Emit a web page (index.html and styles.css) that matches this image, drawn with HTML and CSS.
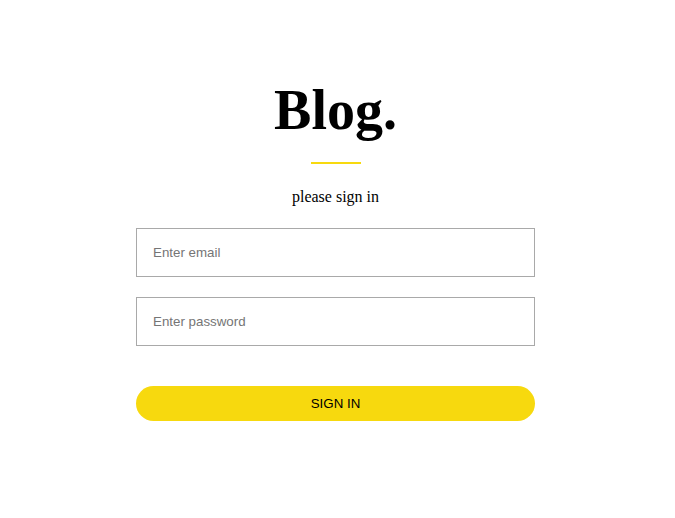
FILE: index.html
```html
<!DOCTYPE html>
<html>
<head>
<meta charset="utf-8">
<link rel="stylesheet" href="styles.css">
</head>
<body>
<main class="login">
  <h1 class="title">Blog.</h1>
  <div class="rule"></div>
  <p class="subtitle">please sign in</p>
  <form class="form">
    <input class="field" type="email" placeholder="Enter email">
    <input class="field" type="password" placeholder="Enter password">
    <button class="submit" type="button">SIGN IN</button>
  </form>
</main>
</body>
</html>
```

FILE: styles.css
```css
html, body {
  margin: 0;
  padding: 0;
  background: #fff;
}
body {
  padding-right: 4px;
}
.login {
  width: 399px;
  margin: 0 auto;
  padding-top: 78px;
  display: flex;
  flex-direction: column;
  align-items: center;
  font-family: "Liberation Serif", serif;
}
.title {
  margin: 0;
  font-size: 56px;
  font-weight: bold;
  line-height: 64px;
  color: #000;
}
.rule {
  width: 50px;
  height: 2px;
  background: #f7d90e;
  margin-top: 20px;
}
.subtitle {
  margin: 23px 0 0;
  font-size: 16px;
  line-height: 20px;
  color: #000;
}
.form {
  width: 100%;
  margin-top: 21px;
  display: flex;
  flex-direction: column;
}
.field {
  box-sizing: border-box;
  height: 49px;
  width: 100%;
  border: 1px solid #a9a9a9;
  padding: 0 16px;
  font-family: "Liberation Sans", Arial, sans-serif;
  font-size: 13.333px;
  color: #333;
  outline: none;
  margin-bottom: 20px;
}
.field::placeholder {
  color: #757575;
}
.submit {
  margin-top: 20px;
  height: 35px;
  width: 100%;
  border: none;
  border-radius: 18px;
  background: #f7d90e;
  font-family: "Liberation Sans", Arial, sans-serif;
  font-size: 13.333px;
  color: #000;
  cursor: pointer;
}
```
